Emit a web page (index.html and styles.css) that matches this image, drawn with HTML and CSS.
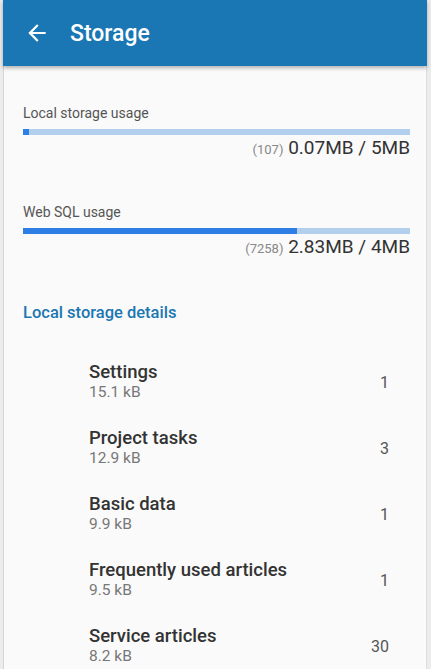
FILE: index.html
```html
<!DOCTYPE html>
<html>
<head>
<meta charset="utf-8">
<link rel="stylesheet" href="styles.css">
</head>
<body>
<div class="frame">
  <div class="app">
    <header class="topbar">
      <svg class="back" width="26" height="26" viewBox="0 0 24 24"><path d="M20 11H7.83l5.59-5.59L12 4l-8 8 8 8 1.41-1.41L7.830 13H20v-2z" fill="#fff"/></svg>
      <h1 class="title">Storage</h1>
    </header>
    <main class="content">
      <section class="usage">
        <div class="usage-label">Local storage usage</div>
        <div class="bar"><div class="bar-fill" style="width:1.5%"></div></div>
        <div class="usage-value"><span class="count">(107)</span> 0.07MB / 5MB</div>
      </section>
      <section class="usage second">
        <div class="usage-label">Web SQL usage</div>
        <div class="bar"><div class="bar-fill" style="width:70.8%"></div></div>
        <div class="usage-value"><span class="count">(7258)</span> 2.83MB / 4MB</div>
      </section>
      <h2 class="details-heading">Local storage details</h2>
      <ul class="list">
        <li class="row"><div class="row-text"><div class="row-title">Settings</div><div class="row-sub">15.1 kB</div></div><div class="row-count">1</div></li>
        <li class="row"><div class="row-text"><div class="row-title">Project tasks</div><div class="row-sub">12.9 kB</div></div><div class="row-count">3</div></li>
        <li class="row"><div class="row-text"><div class="row-title">Basic data</div><div class="row-sub">9.9 kB</div></div><div class="row-count">1</div></li>
        <li class="row"><div class="row-text"><div class="row-title">Frequently used articles</div><div class="row-sub">9.5 kB</div></div><div class="row-count">1</div></li>
        <li class="row"><div class="row-text"><div class="row-title">Service articles</div><div class="row-sub">8.2 kB</div></div><div class="row-count">30</div></li>
      </ul>
    </main>
  </div>
</div>
</body>
</html>
```
FILE: styles.css
```css
html, body {
  margin: 0;
  padding: 0;
}
body {
  font-family: Roboto, "Liberation Sans", sans-serif;
  background: #ececec;
}
.frame {
  height: 669px;
  overflow: hidden;
  padding: 0 4px 0 3px;
  background: #ececec;
}
.app {
  height: 100%;
  background: #fafafa;
  border-left: 1px solid #d6d6d6;
  border-right: 1px solid #dedede;
  box-sizing: border-box;
}
.topbar {
  height: 66px;
  background: #1a77b3;
  display: flex;
  align-items: center;
  padding-left: 21px;
  box-shadow: 0 2px 4px rgba(0,0,0,0.3);
  margin-left: -1px;
  margin-right: -1px;
  position: relative;
}
.back {
  display: block;
}
.title {
  margin: 0 0 0 20px;
  color: #fff;
  font-size: 23px;
  font-weight: 500;
}
.content {
  padding: 39px 16px 0 19px;
}
.usage-label {
  font-size: 14px;
  line-height: 16px;
  color: #555;
}
.bar {
  margin-top: 8px;
  height: 6px;
  background: #b3cfee;
}
.bar-fill {
  height: 100%;
  background: #2d7fe6;
}
.usage-value {
  text-align: right;
  font-size: 19px;
  line-height: 20px;
  color: #333;
  margin-top: 3px;
}
.count {
  font-size: 13px;
  color: #888;
}
.second {
  margin-top: 44px;
}
.details-heading {
  margin: 44px 0 0 0;
  font-size: 16.5px;
  line-height: 20px;
  font-weight: 500;
  color: #1a77b3;
}
.list {
  list-style: none;
  margin: 25px 0 0 0;
  padding: 0 21px 0 66px;
}
.row {
  display: flex;
  align-items: center;
  justify-content: space-between;
  padding: 13px 0;
}
.row-title {
  font-size: 18.5px;
  line-height: 22px;
  font-weight: 500;
  color: #333;
}
.row-sub {
  font-size: 15.5px;
  line-height: 18px;
  color: #777;
}
.row-count {
  font-size: 16px;
  color: #555;
  padding-top: 2px;
}
```
